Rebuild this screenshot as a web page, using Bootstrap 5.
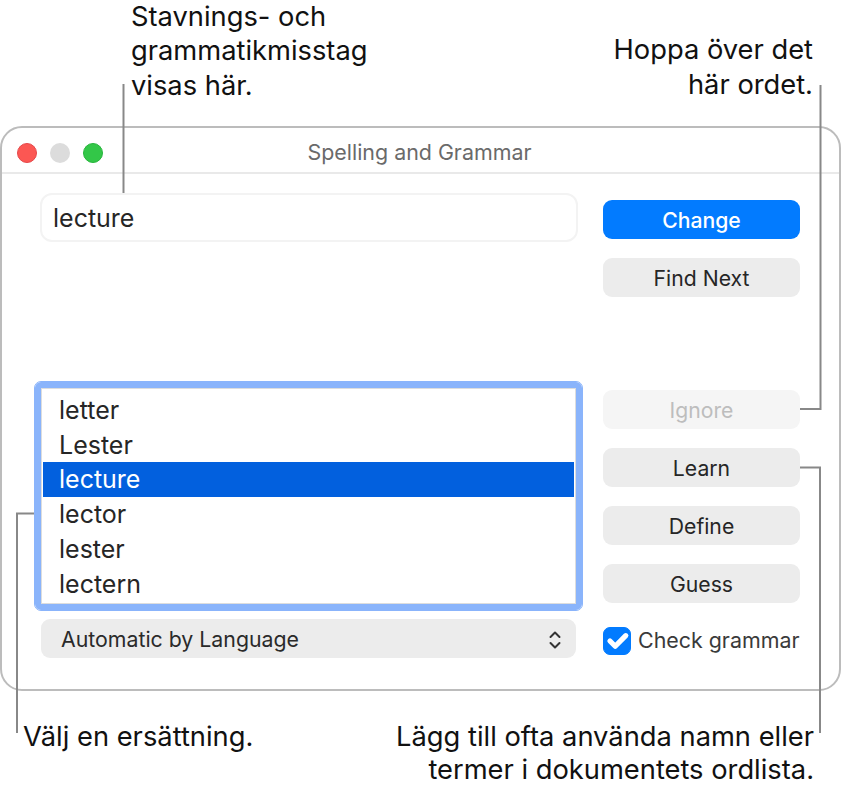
<!doctype html>
<html lang="sv">
<head>
<meta charset="utf-8">
<title>Spelling and Grammar</title>
<link href="https://cdn.jsdelivr.net/npm/bootstrap@5.3.0/dist/css/bootstrap.min.css" rel="stylesheet">
<style>
body{margin:0;background:#fff;font-family:Inter,"Liberation Sans",sans-serif;color:#262626;width:843px;height:790px;overflow:hidden}
.stage{position:relative;width:843px;height:790px}
.caps{font-size:27.300px;line-height:35px;color:#111}
.caps-top{height:126px;padding-left:131px;padding-right:30px}
.cap-first{line-height:33px;margin-bottom:-.5px}
.cap-b{padding-top:32px}
.caps-bot{padding-left:23px;padding-right:29px;margin-top:29px;line-height:33px}
.win{width:841px;height:565px;border:2px solid #bcbcbc;border-radius:22px;background:#fff}
.tbar{height:46px;border-bottom:2px solid #e9e9e9;padding-left:15px;padding-top:5px}
.tl{width:20px;height:20px;border-radius:50%;margin-right:13px}
.tl-r{background:#fc5753;border:1px solid #e5484a}
.tl-g{background:#dcdcdc}
.tl-v{background:#33c748;border:1px solid #27b53c}
.ttl{font-size:21.400px;color:#6a6a6a;flex:1;text-align:center;padding-right:116px}
.lcol{width:547px;margin-left:33px;padding-top:19px}
.fld{margin:0 4px 0 5px;height:49px;border:2px solid #f3f3f3;border-radius:12px;font-size:25px;line-height:47px;padding:0 11px;color:#262626;background:#fff}
.lst{margin-top:140px;height:228px;border:6px solid #8ab4fb;border-radius:6px;outline:1px solid #8ab4fb;padding:5px 2px 1px;background:#fff;box-shadow:inset 0 0 0 1px #ddd}
.lst .list-group-item{border:0;border-radius:0;height:35px;line-height:35px;padding:0 16px;font-size:25px;color:#262626;background:transparent}
.lst .list-group-item.active{background:#0260de;color:#fff}
.sel{margin:9px 6px 0 6px;height:39px;border-radius:9px;background:#ececec;font-size:21.300px;padding:3px 14px 0 20px;color:#2a2a2a}
.rcol{width:197px;margin-left:21px;padding-top:26px}
.pbtn{height:39px;width:100%;border:0;border-radius:9px;background:#ececec;color:#262626;font-size:21.200px;line-height:40px;padding:0;margin-bottom:19px;font-family:inherit;display:block}
.pbtn.pri{background:#027bff;color:#fff;font-weight:500;line-height:38px}
.pbtn.off{background:#f5f5f5;color:#bdbdbd;opacity:1}
.gap-a{margin-top:93px}
.gap-b{margin-bottom:20px}
.chk{margin:21px 0 0;padding:0;min-height:0;font-size:21.400px;color:#3a3a3a}
.chk label{padding-bottom:2px}
.chk .form-check-input{width:28px;height:28px;margin:0 7px 0 0;float:none;border-radius:7px;background-color:#027bff;border-color:#027bff;flex:none;background-size:135%}
.leaders{position:absolute;left:0;top:0;pointer-events:none}
</style>
</head>
<body>
<div class="stage">
  <div class="caps caps-top d-flex justify-content-between">
    <div><div class="cap-first">Stavnings- och</div>grammatikmisstag<br>visas här.</div>
    <div class="cap-b text-end">Hoppa över det<br>här ordet.</div>
  </div>
  <div class="win">
    <div class="tbar d-flex align-items-center">
      <span class="tl tl-r"></span><span class="tl tl-g"></span><span class="tl tl-v"></span>
      <span class="ttl">Spelling and Grammar</span>
    </div>
    <div class="d-flex">
      <div class="lcol">
        <div class="fld">lecture</div>
        <div class="list-group lst">
          <div class="list-group-item">letter</div>
          <div class="list-group-item">Lester</div>
          <div class="list-group-item active">lecture</div>
          <div class="list-group-item">lector</div>
          <div class="list-group-item">lester</div>
          <div class="list-group-item">lectern</div>
        </div>
        <div class="sel d-flex align-items-center justify-content-between">
          <span>Automatic by Language</span>
          <svg width="14" height="20" viewBox="0 0 14 20" fill="none" stroke="#333" stroke-width="2" stroke-linecap="round" stroke-linejoin="round"><path d="M2.500 7 7 2.500 11.500 7M2.500 13 7 17.500 11.500 13"/></svg>
        </div>
      </div>
      <div class="rcol">
        <button class="btn pbtn pri">Change</button>
        <button class="btn pbtn">Find Next</button>
        <button class="btn pbtn off gap-a">Ignore</button>
        <button class="btn pbtn">Learn</button>
        <button class="btn pbtn">Define</button>
        <button class="btn pbtn gap-b">Guess</button>
        <div class="form-check chk d-flex align-items-center">
          <input class="form-check-input" type="checkbox" checked id="cg">
          <label for="cg">Check grammar</label>
        </div>
      </div>
    </div>
  </div>
  <div class="caps caps-bot d-flex justify-content-between">
    <div>Välj en ersättning.</div>
    <div class="text-end">Lägg till ofta använda namn eller<br>termer i dokumentets ordlista.</div>
  </div>
  <svg class="leaders" width="843" height="790" fill="none" stroke="#888" stroke-width="2">
    <path d="M123.500 84V193"/>
    <path d="M800 409H820.500V85"/>
    <path d="M800 467.500H820V733"/>
    <path d="M34 513.500H17V733"/>
  </svg>
</div>
</body>
</html>
